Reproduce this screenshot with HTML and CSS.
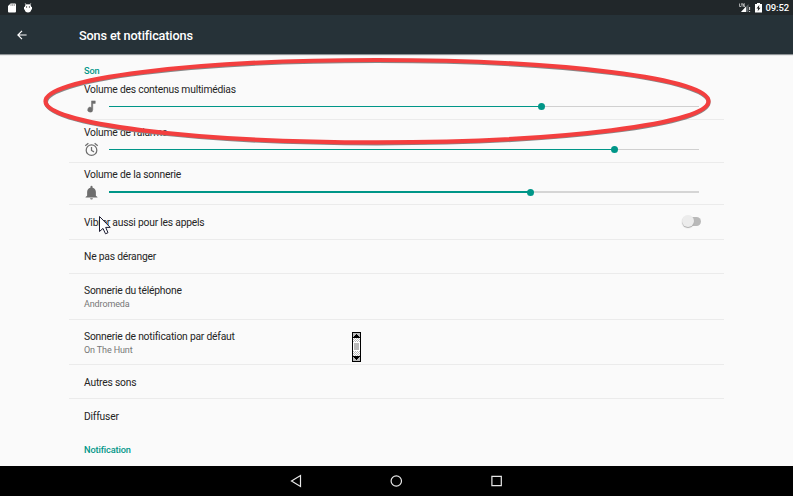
FILE: index.html
```html
<!DOCTYPE html>
<html lang="fr">
<head>
<meta charset="utf-8">
<title>Sons et notifications</title>
<link rel="stylesheet" href="styles.css">
</head>
<body>
<div class="screen">
  <header class="status">
    <svg class="sd" width="8" height="10" viewBox="0 0 8 10"><path d="M2.6 0.5H7Q8 .5 8 1.5V8.500Q8 9.500 7 9.500H1Q0 9.500 0 8.500V3Z" fill="#fff"/><path d="M3 1v2M4.700 1v2M6.300 1v2" stroke="#777" stroke-width=".7"/></svg>
    <svg class="bug" width="8" height="10" viewBox="0 0 8 10"><path d="M1.300 .5 2.300 2M6.700 .5 5.700 2" stroke="#fff" stroke-width="1"/><path d="M.7 4Q1 1.300 4 1.300T7.300 4H8V6.500H7.300Q7 9.500 4 9.500T.7 6.500H0V4Z" fill="#fff"/><circle cx="2.600" cy="4" r=".65" fill="#333"/><circle cx="5.400" cy="4" r=".65" fill="#333"/></svg>
    <span class="space"></span>
    <svg class="signal" width="12" height="10" viewBox="0 0 12 10"><path d="M9.500 1V9H2Z" fill="#62686b"/><path d="M7 3.600V9H2Z" fill="#fff"/><path d="M.6 .5V3.500H2M2 .9H4M3 .9V3.700M6 .9H4.600V3.500H6M4.600 2.200H6" fill="none" stroke="#eee" stroke-width=".7"/><path d="M10.600 4V7M10.600 8V9" stroke="#ddd" stroke-width="1"/></svg>
    <svg class="battery" width="7" height="10" viewBox="0 0 7 10"><path d="M0 1H2V0H5V1H7V9.500H0Z" fill="#fff"/><path d="M4.300 2 1.500 5.500H3.100L2.700 8.300 5.500 4.700H3.900Z" fill="#222"/></svg>
    <span class="clock">09:52</span>
  </header>
  <div class="appbar">
    <svg class="back" width="10" height="10" viewBox="0 0 10 10"><path d="M9.600 5H1M5 .8.900 5 5 9.200" fill="none" stroke="#fff" stroke-width="1.200"/></svg>
    <h1>Sons et notifications</h1>
  </div>
  <main class="settings">
    <h2 class="first">Son</h2>
    <section class="row volume">
      <label>Volume des contenus multimédias</label>
      <div class="control"><svg width="15" height="15" viewBox="0 0 24 24"><path d="M12 3v10.550A4 4 0 1 0 14 17V7h4V3z" fill="#6e6e6e" stroke="#6e6e6e" stroke-width=".8"/></svg><div class="track"><div class="fill" style="width:73.300%"></div></div></div>
    </section>
    <section class="row volume">
      <label>Volume de l'alarme</label>
      <div class="control"><svg width="15" height="15" viewBox="0 0 24 24" fill="none" stroke="#6e6e6e" stroke-width="2"><circle cx="12" cy="13" r="8.500"/><path d="M12 8v5.500l4 2.300M2 6l5-4M22 6l-5-4"/></svg><div class="track"><div class="fill" style="width:85.600%"></div></div></div>
    </section>
    <section class="row volume third">
      <label>Volume de la sonnerie</label>
      <div class="control"><svg width="15" height="15" viewBox="0 0 24 24"><path d="M12 23a2.300 2.300 0 0 0 2.300-2H9.700A2.300 2.300 0 0 0 12 23zm7-6v-6c0-3.300-2-6-5.300-6.700V3a1.700 1.700 0 0 0-3.400 0v1.300C7 5 5 7.700 5 11v6l-2.500 2v1h19v-1z" fill="#6e6e6e"/></svg><div class="track"><div class="fill" style="width:71.400%"></div></div></div>
    </section>
    <section class="row h35"><span>Vibrer aussi pour les appels</span><div class="switch"></div></section>
    <section class="row">Ne pas déranger</section>
    <section class="row tall">Sonnerie du téléphone<small>Andromeda</small></section>
    <section class="row tall h45">Sonnerie de notification par défaut<small>On The Hunt</small></section>
    <section class="row lower">Autres sons</section>
    <section class="row last">Diffuser</section>
    <h2>Notification</h2>
  </main>
  <nav class="nav">
    <svg width="12" height="14" viewBox="0 0 12 14"><path d="M10.500 1.500V12.500L1.500 7Z"/></svg>
    <svg width="12" height="12" viewBox="0 0 12 12"><circle cx="6.300" cy="6" r="5.200"/></svg>
    <svg width="12" height="12" viewBox="0 0 12 12"><path d="M1.900 1.300H11.300V10.700H1.900Z"/></svg>
  </nav>
  <svg class="annotation" width="680" height="96" viewBox="38 54 680 96"><ellipse cx="377.300" cy="102.200" rx="331.300" ry="41.200" stroke="#888" stroke-width="4"/><ellipse cx="377" cy="101.200" rx="331.500" ry="41.200" stroke="#f33f3f" stroke-width="4.200"/></svg>
  <svg class="pointer" width="14" height="21" viewBox="0 0 14 21"><path d="M1.500 1.500V16.500L5 13.400 7.500 18.800 10 17.700 7.700 12.400H12.200Z" fill="#fff" stroke="#1b1b30" stroke-width="1"/></svg>
  <svg class="scroller" width="9" height="30" viewBox="0 0 9 30" shape-rendering="crispEdges"><defs><pattern id="dots" width="2" height="2" patternUnits="userSpaceOnUse"><path d="M0 0h1v1H0zM1 1h1v1H1z" fill="#bbb"/></pattern></defs><path d="M0 0H9V30H0Z" fill="#000"/><path d="M1 1H8V5H1ZM1 25H8V29H1Z" fill="#bbb"/><path d="M1 6H8V24H1Z" fill="#fff"/><path d="M1 6H8V24H1Z" fill="url(#dots)"/><path d="M1 10H8V19H1Z" fill="#fff"/><path d="M2 11H7V18H2Z" fill="#bbb"/><path d="M4 2H5V3H6V4H7V5H2V4H3V3H4ZM2 25H7V26H6V27H5V28H4V27H3V26H2Z" fill="#000"/></svg>
</div>
</body>
</html>
```
FILE: styles.css
```css
* { box-sizing: border-box; }
body { margin: 0; font: 10.3px/14px Roboto, "Liberation Sans", sans-serif; letter-spacing: -0.21px; color: #252525; }
svg { display: block; flex: none; }
.screen { position: relative; width: 793px; height: 496px; overflow: hidden; background: #fafafa; display: flex; flex-direction: column; }
.status { height: 15px; background: #21272a; display: flex; align-items: center; padding: 0 5px 0 8px; color: #fff; }
.bug { margin-left: 8px; }
.space { flex: 1; }
.signal { margin-right: 4px; }
.battery { margin-right: 4px; }
.clock { font-size: 9.5px; letter-spacing: -0.1px; font-weight: 500; width: 22.5px; white-space: nowrap; }
.appbar { height: 39px; background: #263238; display: flex; align-items: center; padding-left: 17px; color: #fff; box-shadow: 0 1px 1px #8d9295; z-index: 1; }
.appbar h1 { margin: 2px 0 0 52px; font-size: 12.7px; letter-spacing: -0.15px; font-weight: 500; line-height: 18px; }
.settings { height: 412px; width: 655px; margin-left: 69px; }
.settings h2 { margin: 0; padding: 10px 15px 0; color: #009688; font-size: 9.2px; letter-spacing: -0.12px; font-weight: 500; line-height: 14px; }
.settings h2.first { height: 23px; }
.row { height: 34px; padding: 1px 15px 0; border-bottom: 1px solid #ebebeb; display: flex; align-items: center; justify-content: space-between; }
.volume { height: 43px; padding: 6px 15px 0; display: block; }
.third { height: 42px; padding-top: 5px; }
.third .control { height: 20px; }
.volume label { display: block; height: 14px; }
.control { height: 18px; display: flex; align-items: center; }
.track { margin-left: 10px; width: 590px; height: 1px; background: #d0d0d0; }
.third .track { height: 2px; background: #d5d5d5; }
.fill { height: 100%; background: #009688; position: relative; }
.fill::after { content: ""; position: absolute; right: -4px; top: 50%; width: 7px; height: 7px; margin-top: -3.5px; border-radius: 50%; background: #009688; }
.h35 { height: 35px; }
.tall { height: 46px; padding-top: 0; flex-direction: column; align-items: flex-start; justify-content: center; }
.h45 { height: 45px; padding-top: 1px; }
.lower { padding-top: 2px; }
.tall small { color: #777; font-size: 9px; letter-spacing: -0.12px; line-height: 12px; }
.last { border: 0; }
.switch { width: 17px; height: 9px; margin: 0 8px 2px 0; border-radius: 5px; background: #b9b9b9; position: relative; }
.switch::before { content: ""; position: absolute; left: -2px; top: -2px; width: 12px; height: 12px; border-radius: 50%; background: #ececec; box-shadow: 0 1px 1px #aaa; }
.nav { height: 30px; background: #000; display: flex; align-items: center; justify-content: center; gap: 88px; padding-right: 1px; }
.nav svg { fill: none; stroke: #e8e8e8; stroke-width: 1.2; }
.annotation { position: absolute; left: 38px; top: 54px; fill: none; z-index: 2; }
.pointer { position: absolute; left: 98px; top: 215px; }
.scroller { position: absolute; left: 352px; top: 332px; }
```
